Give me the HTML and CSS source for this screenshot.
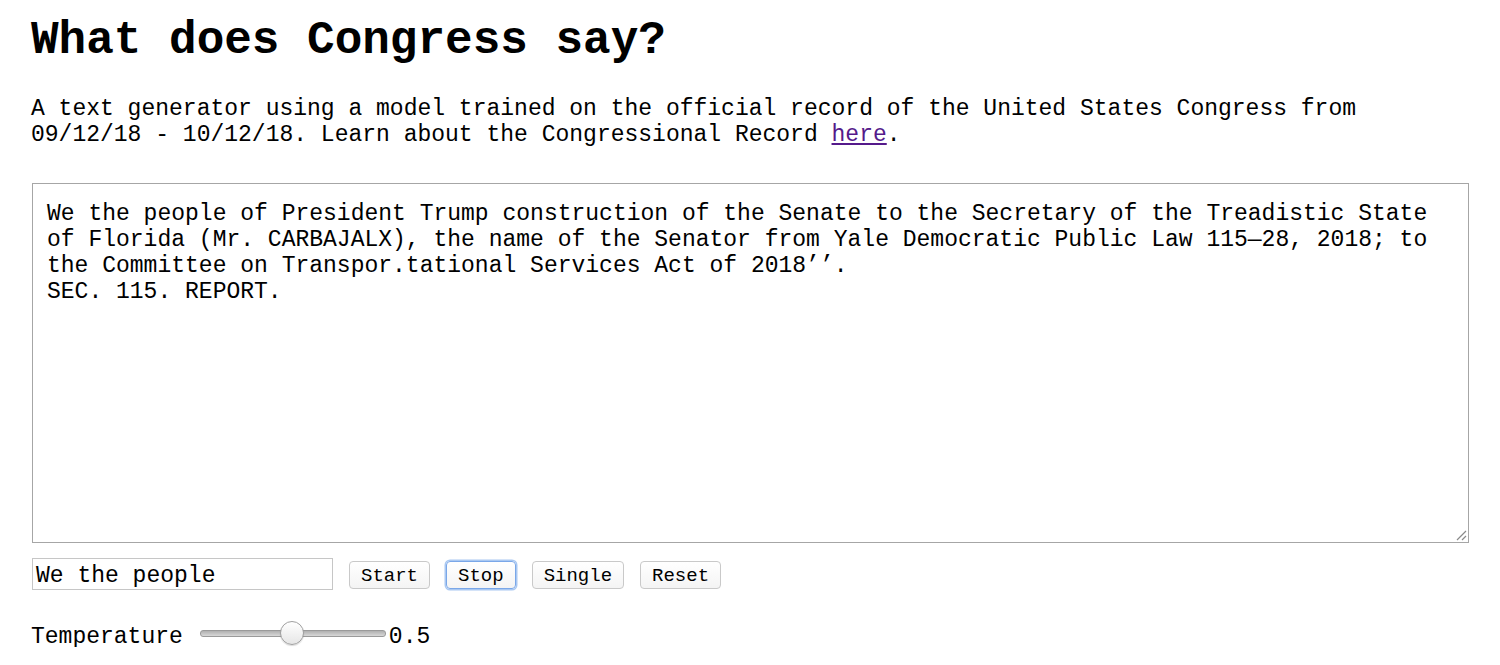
FILE: index.html
```html
<!DOCTYPE html>
<html>
<head>
<meta charset="utf-8">
<link rel="stylesheet" href="styles.css">
</head>
<body>
<main class="page">
  <h1 class="title">What does Congress say?</h1>
  <p class="intro">A text generator using a model trained on the official record of the United States Congress from 09/12/18 - 10/12/18. Learn about the Congressional Record <a class="link" href="#">here</a>.</p>
  <div class="output">
    <div class="output-text">We the people of President Trump construction of the Senate to the Secretary of the Treadistic State of Florida (Mr. CARBAJALX), the name of the Senator from Yale Democratic Public Law 115—28, 2018; to the Committee on Transpor.tational Services Act of 2018’’.
SEC. 115. REPORT.</div>
    <svg class="grip" width="12" height="12" viewBox="0 0 12 12"><path d="M11 2 L2 11 M11 7 L7 11" stroke="#8a8a8a" stroke-width="1.2" fill="none"/></svg>
  </div>
  <div class="controls">
    <div class="seed">We the people</div>
    <button class="btn">Start</button>
    <button class="btn btn-focus">Stop</button>
    <button class="btn">Single</button>
    <button class="btn">Reset</button>
  </div>
  <div class="temp">
    <span class="temp-label">Temperature</span>
    <div class="slider"><div class="track"></div><div class="thumb"></div></div>
    <span class="temp-value">0.5</span>
  </div>
</main>
</body>
</html>
```
FILE: styles.css
```css
html, body {
  margin: 0;
  padding: 0;
  background: #fff;
}
body {
  font-family: "Liberation Mono", "Courier New", monospace;
  color: #000;
}
.page {
  padding: 15px 0 0 31px;
  width: 1438px;
}
.title {
  margin: 0;
  font-size: 46px;
  font-weight: bold;
  line-height: 52px;
}
.intro {
  margin: 29px 0 0 0;
  font-size: 23px;
  line-height: 26px;
  width: 1400px;
}
.link {
  color: #551a8b;
  text-decoration: underline;
}
.output {
  position: relative;
  margin: 35px 0 0 1px;
  height: 358px;
  width: 1435px;
  border: 1px solid #a6a6a6;
  box-sizing: content-box;
}
.output-text {
  padding: 17px 14px 0 14px;
  font-size: 23px;
  line-height: 26px;
  white-space: pre-wrap;
}
.grip {
  position: absolute;
  right: 1px;
  bottom: 1px;
}
.controls {
  display: flex;
  align-items: center;
  gap: 16px;
  margin: 15px 0 0 1px;
}
.seed {
  width: 296px;
  height: 30px;
  border: 1px solid #c6c6c6;
  font-size: 23px;
  line-height: 34px;
  padding-left: 3px;
  box-sizing: content-box;
}
.btn {
  font-family: "Liberation Mono", "Courier New", monospace;
  font-size: 19px;
  height: 28px;
  padding: 2px 11px 0 11px;
  margin: 2px 0 0 0;
  background: linear-gradient(#ffffff, #f4f4f4);
  border: 1px solid #c9c9c9;
  border-radius: 4px;
  color: #000;
  line-height: 24px;
}
.btn-focus {
  border: 1px solid #7aa7e8;
  box-shadow: 0 0 0 1.5px #a9c8f2;
}
.temp {
  display: flex;
  align-items: center;
  margin-top: 31px;
  font-size: 23px;
  line-height: 26px;
}
.temp-label {
  position: relative;
  top: 3px;
}
.temp-value {
  position: relative;
  top: 3px;
  margin-left: 3px;
}
.slider {
  position: relative;
  width: 186px;
  height: 26px;
  margin-left: 17px;
}
.track {
  position: absolute;
  left: 0;
  right: 0;
  top: 9px;
  height: 5px;
  border-radius: 3px;
  background: linear-gradient(#b0b0b0, #d8d8d8);
  border: 1px solid #9a9a9a;
}
.thumb {
  position: absolute;
  left: 80px;
  top: 0;
  width: 22px;
  height: 22px;
  border-radius: 50%;
  background: linear-gradient(#ffffff, #e6e6e6);
  border: 1px solid #a0a0a0;
  box-shadow: 0 1px 1px rgba(0,0,0,0.15);
}
```
